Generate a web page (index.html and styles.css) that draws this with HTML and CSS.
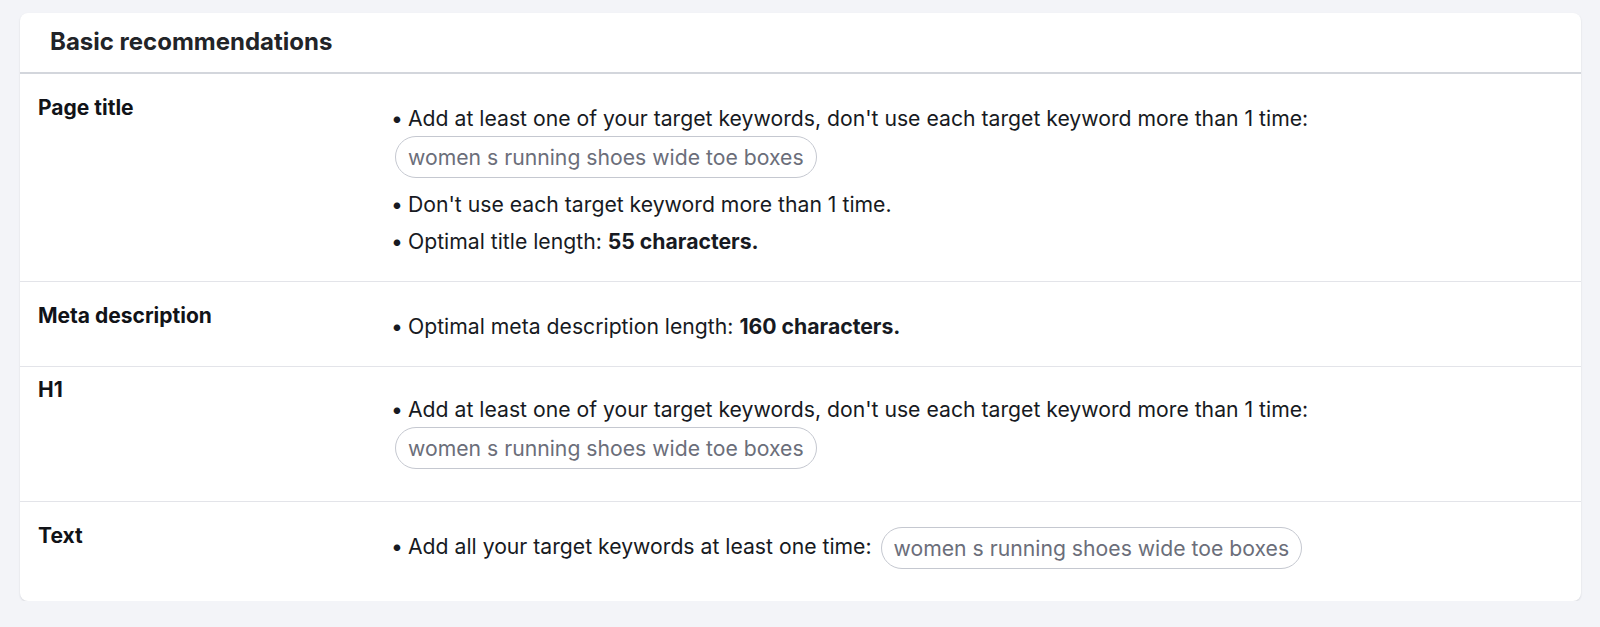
FILE: index.html
```html
<!DOCTYPE html>
<html lang="en">
<head>
<meta charset="utf-8">
<title>Basic recommendations</title>
<link rel="stylesheet" href="styles.css">
</head>
<body>
<section class="card">
  <header class="card-head">
    <h2 class="card-title">Basic recommendations</h2>
  </header>
  <div class="rec-row">
    <div class="rec-label">Page title</div>
    <ul class="rec-list">
      <li>Add at least one of your target keywords, don't use each target keyword more than 1 time:
        <span class="pill pill-block">women s running shoes wide toe boxes</span>
      </li>
      <li>Don't use each target keyword more than 1 time.</li>
      <li>Optimal title length: <b>55 characters.</b></li>
    </ul>
  </div>
  <div class="rec-row">
    <div class="rec-label">Meta description</div>
    <ul class="rec-list">
      <li>Optimal meta description length: <b>160 characters.</b></li>
    </ul>
  </div>
  <div class="rec-row rec-row-compact">
    <div class="rec-label">H1</div>
    <ul class="rec-list">
      <li>Add at least one of your target keywords, don't use each target keyword more than 1 time:
        <span class="pill pill-block">women s running shoes wide toe boxes</span>
      </li>
    </ul>
  </div>
  <div class="rec-row rec-row-last">
    <div class="rec-label">Text</div>
    <ul class="rec-list rec-list-inline">
      <li>Add all your target keywords at least one time: <span class="pill pill-inline">women s running shoes wide toe boxes</span></li>
    </ul>
  </div>
</section>
</body>
</html>
```

FILE: styles.css
```css
*, *::before, *::after { box-sizing: border-box; }

html, body {
  margin: 0;
  padding: 0;
}

body {
  background: #f3f4f8;
  font-family: Inter, "Noto Sans", "Liberation Sans", sans-serif;
  color: #171a22;
  padding: 13px 19px 0 20px;
}

.card {
  background: #ffffff;
  border-radius: 8px;
  box-shadow: 0 1px 2px rgba(30, 35, 50, 0.14);
  overflow: hidden;
}

.card-head {
  height: 61px;
  padding: 0 30px;
  display: flex;
  align-items: center;
  border-bottom: 2px solid #d3d6dc;
}

.card-title {
  margin: 0;
  font-size: 24px;
  font-weight: 700;
  color: #222428;
  padding-bottom: 2px;
}

.rec-row {
  display: grid;
  grid-template-columns: 367px 1fr;
  border-bottom: 1px solid #e3e4e9;
  padding-bottom: 26px;
}

.rec-row-last {
  border-bottom: none;
  padding-bottom: 32px;
}

.rec-label {
  padding: 20px 18px 0;
  font-size: 21px;
  line-height: 28px;
  font-weight: 700;
  color: #111318;
}

.rec-list {
  list-style: none;
  margin: 0;
  padding: 30px 0 0;
  font-size: 21.2px;
  line-height: 28px;
}

.rec-row-compact .rec-label {
  padding-top: 9px;
}

.rec-row-compact .rec-list {
  padding-top: 28px;
}

.rec-list li {
  margin-bottom: 9px;
}

.rec-list li:last-child {
  margin-bottom: 0;
}

.rec-list li::before {
  content: "•";
  display: inline-block;
  width: 21px;
  padding-left: 4px;
}

.rec-list b {
  font-weight: 700;
}

.pill {
  display: inline-block;
  height: 42px;
  line-height: 40px;
  padding: 0 12px;
  border: 1px solid #c5c8d0;
  border-radius: 21px;
  color: #6b6e7a;
  white-space: nowrap;
}

.pill-block {
  display: table;
  margin: 4px 0 12px 8px;
}

.rec-list li:last-child .pill-block {
  margin-bottom: 6px;
}

.rec-list-inline {
  padding-top: 25px;
}

.pill-inline {
  vertical-align: middle;
  margin-left: 3px;
}
```
